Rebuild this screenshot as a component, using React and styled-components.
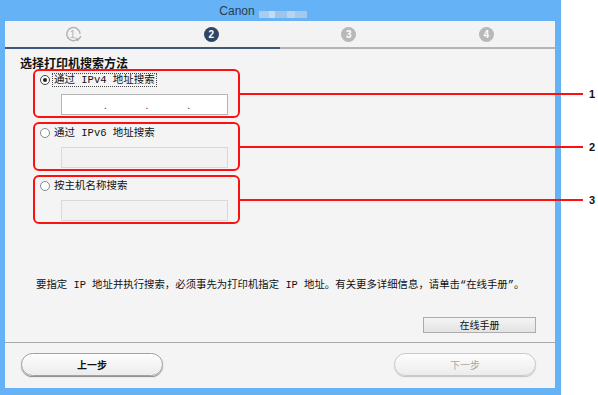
import React from "react";
import styled, { createGlobalStyle } from "styled-components";

const GlobalStyle = createGlobalStyle`
  html, body {
    margin: 0;
    padding: 0;
    background: #ffffff;
  }
  body {
    font-family: "Noto Sans CJK SC", "Noto Sans", sans-serif;
    color: #000;
  }
`;

const Window = styled.div`
  width: 561px;
  height: 395px;
  box-sizing: border-box;
  background: #66b2f6;
  padding: 0 6px 7px 5px;
  display: flex;
  flex-direction: column;
`;

const TitleBar = styled.div`
  height: 21px;
  display: flex;
  align-items: center;
  justify-content: center;
  padding-right: 34px;
  gap: 4px;
`;

const TitleText = styled.span`
  font-family: "Liberation Sans", "Noto Sans", sans-serif;
  font-size: 12px;
  color: #2b3a4a;
`;

const Blur = styled.span`
  display: inline-block;
  width: ${(p) => p.w}px;
  height: 7px;
  background: ${(p) => p.c};
`;

const Content = styled.div`
  flex: 1;
  background: #f4f4f4;
  display: flex;
  flex-direction: column;
`;

const StepBar = styled.div`
  display: grid;
  grid-template-columns: repeat(4, 1fr);
  height: 28px;
  background: #f3f3f3;
`;

const StepCell = styled.div`
  display: flex;
  align-items: center;
  justify-content: center;
  border-bottom: 2px solid ${(p) => (p.done ? "#3f577a" : "#b5b5b5")};
`;

const StepDot = styled.span`
  width: 15px;
  height: 15px;
  border-radius: 50%;
  background: ${(p) => (p.active ? "#2f4566" : "#b8b8b8")};
  color: #fff;
  font-family: "Liberation Sans", sans-serif;
  font-weight: bold;
  font-size: 10px;
  display: flex;
  align-items: center;
  justify-content: center;
`;

const Main = styled.div`
  flex: 1;
  display: flex;
  flex-direction: column;
  padding: 7px 15px 9px 15px;
`;

const Heading = styled.div`
  font-size: 12px;
  font-weight: 600;
  line-height: 13px;
  color: #111;
`;

const Groups = styled.div`
  display: flex;
  flex-direction: column;
  gap: 4px;
  margin-left: 13px;
`;

const Group = styled.div`
  position: relative;
  width: 207px;
  height: 49px;
  box-sizing: border-box;
  border: 2px solid #ff1010;
  border-radius: 6px;
  padding: 2px 0 0 5px;
`;

const Callout = styled.span`
  position: absolute;
  left: 100%;
  top: 50%;
  margin-top: -1px;
  width: 345px;
  height: 2px;
  background: #ff1010;
  z-index: 2;
`;

const CalloutNum = styled.span`
  position: absolute;
  left: calc(100% + 351px);
  top: 50%;
  transform: translateY(-50%);
  font-family: "Liberation Sans", sans-serif;
  font-weight: bold;
  font-size: 11px;
  color: #111;
`;

const RadioRow = styled.label`
  display: flex;
  align-items: center;
  height: 14px;
  gap: 2px;
`;

const Radio = styled.span`
  width: 8px;
  height: 8px;
  border-radius: 50%;
  border: 1px solid ${(p) => (p.checked ? "#444" : "#8a8a8a")};
  background: #fff;
  display: flex;
  align-items: center;
  justify-content: center;
  flex-shrink: 0;
  &::after {
    content: "";
    width: 4px;
    height: 4px;
    border-radius: 50%;
    background: ${(p) => (p.checked ? "#222" : "transparent")};
  }
`;

const RadioLabel = styled.span`
  font-family: "Liberation Mono", "Noto Sans CJK SC", monospace;
  font-size: 10.5px;
  line-height: 12px;
  padding: 0 1px;
  white-space: pre;
  border: 1px dotted ${(p) => (p.focused ? "#444" : "transparent")};
  color: #111;
`;

const Field = styled.div`
  width: 167px;
  height: 21px;
  box-sizing: border-box;
  margin: 7px 0 0 21px;
  border: 1px solid ${(p) => (p.disabled ? "#d9d9d9" : "#b4b4b4")};
  background: ${(p) => (p.disabled ? "#f2f2f2" : "#ffffff")};
  display: flex;
  align-items: center;
  justify-content: space-between;
  padding: 0 37px 0 42px;
  font-size: 10px;
  color: #333;
`;

const Note = styled.p`
  margin: auto 0 0 16px;
  font-family: "Liberation Mono", "Noto Sans CJK SC", monospace;
  font-size: 10.4px;
  line-height: 14px;
  white-space: pre;
  color: #111;
`;

const ManualRow = styled.div`
  display: flex;
  justify-content: flex-end;
  margin: 25px 4px 0 0;
`;

const ManualButton = styled.button`
  width: 113px;
  height: 16px;
  padding: 0;
  border: 1px solid #acacac;
  background: linear-gradient(#f4f4f4, #e3e3e3);
  font-family: "Noto Sans CJK SC", sans-serif;
  font-size: 10px;
  line-height: 14px;
  color: #111;
`;

const Footer = styled.div`
  border-top: 1px solid #a8a8a8;
  display: flex;
  justify-content: space-between;
  padding: 10px 19px 12px 16px;
`;

const PillButton = styled.button`
  width: 142px;
  height: 23px;
  padding: 0;
  border-radius: 12px;
  border: 1px solid ${(p) => (p.disabled ? "#c9c9c9" : "#a2a2a2")};
  background: linear-gradient(#fdfdfd, #ececec);
  box-shadow: 0 1px 1px ${(p) => (p.disabled ? "#c4c4c4" : "#8a8a8a")};
  font-family: "Noto Sans CJK SC", sans-serif;
  font-size: 10px;
  font-weight: ${(p) => (p.disabled ? 400 : 600)};
  color: ${(p) => (p.disabled ? "#a6a6a6" : "#111")};
`;

const DoneIcon = () => (
  <svg width="17" height="17" viewBox="0 0 17 17">
    <path
      d="M13.2 12.6 A6.6 6.6 0 1 1 15 8"
      fill="none"
      stroke="#b4b4b4"
      strokeWidth="1.5"
    />
    <path d="M10.6 12.2 l2 2.2 l3.4 -4.2" fill="none" stroke="#b4b4b4" strokeWidth="1.5" />
    <text
      x="7.6"
      y="11.6"
      fontSize="10"
      fontFamily="Liberation Sans, sans-serif"
      fill="#b4b4b4"
      textAnchor="middle"
    >
      1
    </text>
  </svg>
);

const options = [
  { label: "通过 IPv4 地址搜索", checked: true, ip: true },
  { label: "通过 IPv6 地址搜索" },
  { label: "按主机名称搜索" },
];

export default function App() {
  return (
    <>
      <GlobalStyle />
      <Window>
        <TitleBar>
          <TitleText>Canon</TitleText>
          <span>
            <Blur w={10} c="#a9cdee" />
            <Blur w={6} c="#c4dcf2" />
            <Blur w={12} c="#9dc5ea" />
            <Blur w={8} c="#b8d4ef" />
            <Blur w={12} c="#a4c9ec" />
          </span>
        </TitleBar>
        <Content>
          <StepBar>
            <StepCell done>
              <DoneIcon />
            </StepCell>
            <StepCell done>
              <StepDot active>2</StepDot>
            </StepCell>
            <StepCell>
              <StepDot>3</StepDot>
            </StepCell>
            <StepCell>
              <StepDot>4</StepDot>
            </StepCell>
          </StepBar>
          <Main>
            <Heading>选择打印机搜索方法</Heading>
            <Groups>
              {options.map((o, i) => (
                <Group key={o.label}>
                  <RadioRow>
                    <Radio checked={o.checked} />
                    <RadioLabel focused={o.checked}>{o.label}</RadioLabel>
                  </RadioRow>
                  <Field disabled={!o.ip}>
                    {o.ip && (
                      <>
                        <span>.</span>
                        <span>.</span>
                        <span>.</span>
                      </>
                    )}
                  </Field>
                  <Callout />
                  <CalloutNum>{i + 1}</CalloutNum>
                </Group>
              ))}
            </Groups>
            <Note>要指定 IP 地址并执行搜索，必须事先为打印机指定 IP 地址。有关更多详细信息，请单击“在线手册”。</Note>
            <ManualRow>
              <ManualButton>在线手册</ManualButton>
            </ManualRow>
          </Main>
          <Footer>
            <PillButton>上一步</PillButton>
            <PillButton disabled>下一步</PillButton>
          </Footer>
        </Content>
      </Window>
    </>
  );
}
